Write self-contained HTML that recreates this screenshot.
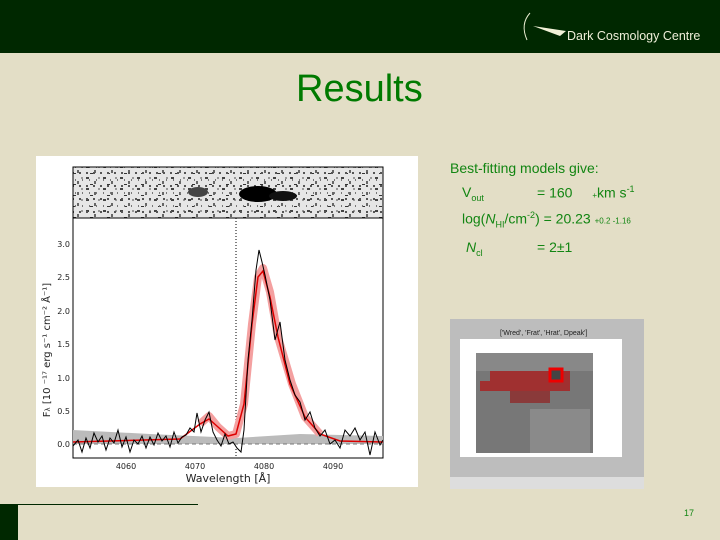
<!DOCTYPE html>
<html><head><meta charset="utf-8"><style>
body{margin:0;width:720px;height:540px;background:#e3dec6;position:relative;overflow:hidden;font-family:"Liberation Sans",sans-serif}
.hdr{position:absolute;left:0;top:0;width:720px;height:53px;background:#002800}
.t{position:absolute;left:296px;top:68px;font-size:38px;color:#007a00}
.g{position:absolute;color:#128512;font-size:14px;white-space:nowrap}
sub,sup{font-size:9px}
</style></head><body>
<div class="hdr">
<svg width="720" height="53" style="position:absolute;left:0;top:0">
<path d="M530 13 Q520 24 527 40" stroke="#e8ecd0" fill="none" stroke-width="1"/>
<path d="M533 26 L566 31 L560 36 Z" fill="#f2f2d8"/>
<text x="567" y="40" fill="#eeeed8" font-size="12.5" font-family="Liberation Sans">Dark Cosmology Centre</text>
</svg></div>
<div class="t">Results</div>
<div class="g" style="left:450px;top:160px">Best-fitting models give:</div>
<div class="g" style="left:462px;top:184px">V<sub>out</sub></div>
<div class="g" style="left:537px;top:184px">= 160 <span style="font-size:8px;margin-left:16px">+</span>km s<sup>-1</sup></div>
<div class="g" style="left:462px;top:210px">log(<i>N</i><sub>HI</sub>/cm<sup>-2</sup>) = 20.23 <span style="font-size:8px">+0.2 -1.16</span></div>
<div class="g" style="left:466px;top:239px"><i>N</i><sub>cl</sub></div>
<div class="g" style="left:537px;top:239px">= 2±1</div>
<svg width="382" height="331" style="position:absolute;left:36px;top:156px" viewBox="36 156 382 331">
<rect x="36" y="156" width="382" height="331" fill="#fff"/>
<defs>
<pattern id="n" width="17" height="11" patternUnits="userSpaceOnUse"><rect width="17" height="11" fill="#e6e6e6"/><rect x="1" y="1" width="3" height="2" fill="#444"/><rect x="9" y="5" width="2" height="3" fill="#666"/><rect x="5" y="8" width="3" height="1" fill="#333"/><rect x="13" y="1" width="2" height="2" fill="#999"/></pattern>
<pattern id="m" width="7" height="13" patternUnits="userSpaceOnUse"><rect x="2" y="3" width="2" height="2" fill="#555"/><rect x="5" y="10" width="1" height="2" fill="#777"/></pattern>
</defs>
<rect x="73" y="167" width="310" height="51" fill="url(#n)"/>
<rect x="73" y="167" width="310" height="51" fill="url(#m)"/>
<ellipse cx="258" cy="194" rx="19" ry="8" fill="#000"/><ellipse cx="283" cy="196" rx="14" ry="5" fill="#111"/>
<ellipse cx="198" cy="192" rx="10" ry="5" fill="#444"/>
<rect x="73" y="167" width="310" height="291" fill="none" stroke="#000"/>
<line x1="73" y1="218" x2="383" y2="218" stroke="#000"/>
<line x1="236" y1="218" x2="236" y2="458" stroke="#000" stroke-dasharray="1,2"/>
<polygon points="73,430 150,434 236,438 300,434 383,436 383,444 73,444" fill="#bbb"/>
<line x1="73" y1="444" x2="383" y2="444" stroke="#777" stroke-dasharray="4,3"/>
<polyline fill="none" stroke="#f4a0a0" stroke-width="8" stroke-linejoin="round" points="200,424 209,416 218,427 228,436 236,434 244,404 252,324 258,277 263,268 270,292 278,337 292,384 305,417 320,434"/>
<polyline fill="none" stroke="#d00" stroke-width="1.5" points="73,442 180,439 200,424 209,419 218,427 228,436 236,434 244,404 252,324 258,277 263,271 270,297 278,337 290,384 305,417 320,434 340,441 383,442"/>
<polyline fill="none" stroke="#000" stroke-width="1" points="73,446 78,440 82,452 86,438 90,448 94,433 98,442 102,436 106,450 110,438 114,443 118,430 122,447 126,437 130,452 134,440 138,444 142,436 146,448 150,437 154,445 158,433 162,441 166,436 170,447 174,432 178,443 182,437 186,435 190,428 194,432 197,413 201,432 205,420 209,412 213,432 217,440 221,446 225,434 229,444 233,442 237,448 241,452 244,430 248,360 252,320 256,270 259,250 262,262 265,275 270,300 275,340 280,322 285,360 290,380 295,395 300,402 305,420 310,412 315,428 320,436 325,430 330,444 335,440 340,448 345,430 350,436 355,428 360,440 365,432 370,455 375,432 380,445 383,440"/>
<g font-size="8" fill="#222" font-family="DejaVu Sans" text-anchor="end">
<text x="70" y="247">3.0</text><text x="70" y="280">2.5</text><text x="70" y="314">2.0</text><text x="70" y="347">1.5</text><text x="70" y="381">1.0</text><text x="70" y="414">0.5</text><text x="70" y="447">0.0</text></g>
<g font-size="8" fill="#222" font-family="DejaVu Sans" text-anchor="middle">
<text x="126" y="469">4060</text><text x="195" y="469">4070</text><text x="264" y="469">4080</text><text x="333" y="469">4090</text></g>
<text x="228" y="482" font-size="11" text-anchor="middle" fill="#222" font-family="DejaVu Sans">Wavelength [Å]</text>
<text transform="translate(50,350) rotate(-90)" font-size="10" text-anchor="middle" fill="#222" font-family="DejaVu Sans">F<tspan font-size="7">λ</tspan> [10 ⁻¹⁷ erg s⁻¹ cm⁻² Å⁻¹]</text>
</svg>
<svg width="194" height="170" style="position:absolute;left:450px;top:319px">
<rect width="194" height="170" fill="#bdbdbd"/>
<rect x="10" y="20" width="162" height="118" fill="#fff"/>
<rect x="26" y="34" width="117" height="100" fill="#777"/>
<rect x="26" y="34" width="117" height="18" fill="#888"/>
<rect x="40" y="52" width="80" height="10" fill="#a03030"/>
<rect x="30" y="62" width="90" height="10" fill="#a03030"/>
<rect x="60" y="72" width="40" height="12" fill="#8a3a3a"/>
<rect x="80" y="90" width="60" height="44" fill="#8a8a8a"/>
<rect x="100" y="50" width="12" height="12" fill="#444" stroke="#e00" stroke-width="3"/>
<rect x="0" y="158" width="194" height="12" fill="#ddd"/>
<text x="50" y="16" font-size="7" fill="#222">['Wred', 'Frat', 'Hrat', Dpeak']</text>
</svg>
<div style="position:absolute;left:0;top:504px;width:18px;height:36px;background:#002800"></div>
<div style="position:absolute;left:18px;top:504px;width:180px;height:1px;background:#002800"></div>
<div style="position:absolute;left:684px;top:508px;font-size:9px;color:#128512">17</div>
</body></html>
